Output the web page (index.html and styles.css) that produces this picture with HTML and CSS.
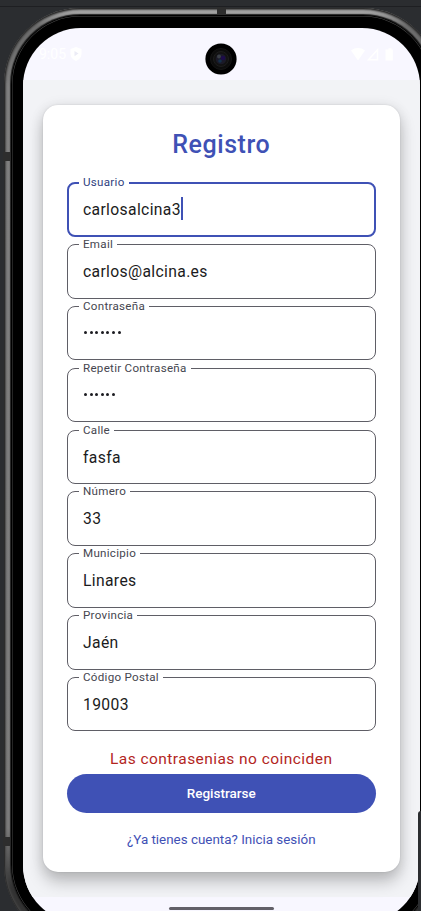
FILE: index.html
```html
<!DOCTYPE html>
<html lang="es">
<head>
<meta charset="utf-8">
<title>Registro</title>
<link rel="stylesheet" href="styles.css">
</head>
<body>
<div class="desk">
  <div class="phone">
    <div class="bezel">
      <div class="screen">
        <header class="status">
          <span class="clock">9:05</span>
          <svg class="shield" width="12" height="14" viewBox="0 0 12 14"><path fill="#fff" d="M6 0l5.500 2v5c0 3-2.300 5.700-5.500 7C2.800 12.700.5 10 .5 7V2z"/><path fill="#ececf6" d="M4.500 4l4 2.600-4 2.600z"/></svg>
          <svg class="signals" width="42" height="13" viewBox="0 0 42 13"><path fill="#fff" d="M0 2.500C4-.8 10-.8 14 2.500L7 12.500zM35.500 1.500h2V.3h3v1.200h1.300v11h-7.300v-11z"/><path fill="none" stroke="#fff" stroke-width="1.500" d="M17.500 11.800h9v-10z"/></svg>
        </header>
        <main class="content">
          <form class="card">
            <h1>Registro</h1>
            <div class="fields">
              <fieldset class="focused"><legend>Usuario</legend><span class="value">carlosalcina3</span><i class="caret"></i></fieldset>
              <fieldset><legend>Email</legend><span class="value">carlos@alcina.es</span></fieldset>
              <fieldset><legend>Contraseña</legend><span class="value dots"><i></i><i></i><i></i><i></i><i></i><i></i><i></i></span></fieldset>
              <fieldset><legend>Repetir Contraseña</legend><span class="value dots"><i></i><i></i><i></i><i></i><i></i><i></i></span></fieldset>
              <fieldset><legend>Calle</legend><span class="value">fasfa</span></fieldset>
              <fieldset><legend>Número</legend><span class="value">33</span></fieldset>
              <fieldset><legend>Municipio</legend><span class="value">Linares</span></fieldset>
              <fieldset><legend>Provincia</legend><span class="value">Jaén</span></fieldset>
              <fieldset><legend>Código Postal</legend><span class="value">19003</span></fieldset>
            </div>
            <p class="error">Las contrasenias no coinciden</p>
            <button type="button">Registrarse</button>
            <a class="login">¿Ya tienes cuenta? Inicia sesión</a>
          </form>
        </main>
        <footer class="nav"><span class="handle"></span></footer>
      </div>
    </div>
  </div>
  <div class="line"></div>
  <div class="band band-top"></div>
  <div class="band band-left"></div>
  <div class="band band-low"></div>
  <div class="side-panel"></div>
  <svg class="camera" width="32" height="32" viewBox="0 0 32 32"><circle cx="16" cy="16" r="15.600"/><circle cx="16" cy="16" r="10.500" fill="#0c0c0c" stroke="#141414"/><circle cx="16" cy="16" r="7.500" fill="#121212" stroke="#1d1d1d"/><circle cx="16" cy="16" r="5.300" fill="#1b1a28"/><circle cx="14" cy="13.500" r="2" fill="#3a3f46"/><circle cx="18" cy="15" r="2.300" fill="#1d0c4a"/><circle cx="15" cy="18" r="1.800" fill="#14304a"/></svg>
</div>
</body>
</html>
```
FILE: styles.css
```css
* { box-sizing: border-box; }
html, body { margin: 0; height: 100%; overflow: hidden; }
body { font-family: Roboto, "Noto Sans", sans-serif; }
.desk {
  position: relative;
  width: 421px;
  height: 911px;
  padding: 8px 0 0 4px;
  overflow: hidden;
  background: #2b2d30;
}
.phone {
  width: 435px;
  height: 934px;
  padding: 7px 7px 8px;
  border-radius: 76px;
  background: linear-gradient(#b0b0b0 0, #a0a0a0 5px, #6e6e6e 18px, #6e6e6e 40px, #808080 80px, #7c7c7c 820px, #333 880px);
  box-shadow: inset 0 0 1px 1px #2a2a2a, inset 0 0 2px 2px #4a4a4a;
}
.bezel {
  height: 919px;
  padding: 13px 12px 11px;
  border-radius: 69px;
  background: #000;
  box-shadow: 0 0 1px 1px #222, inset 0 0 0 1px #000, inset 0 0 0 1.500px #4a4a4a;
}
.screen {
  width: 397px;
  height: 895px;
  border-radius: 58px;
  overflow: hidden;
  background: #f8f7ff;
}
.status {
  display: flex;
  align-items: center;
  height: 52px;
  padding: 0 27px 0 16px;
}
.clock { color: #fff; font-size: 14px; line-height: 16px; }
.shield { margin-left: 4px; }
.signals { margin-left: auto; }
.content {
  height: 817px;
  padding: 25px 20px 0 19.500px;
  background: #f2f3f6;
}
.card {
  display: flex;
  flex-direction: column;
  height: 767px;
  padding: 24px 24.500px 0;
  border-radius: 15px;
  background: #fff;
  box-shadow: 0 0 2px rgba(0,0,0,.12), 0 1px 14px rgba(0,0,0,.09), 0 10px 16px rgba(0,0,0,.22);
}
h1 {
  margin: 0;
  height: 47px;
  color: #3f51b5;
  font-size: 25px;
  line-height: 32px;
  font-weight: 500;
  letter-spacing: .55px;
  text-align: center;
}
.fields { display: grid; flex: none; grid-template-rows: 62px; grid-auto-rows: 61.850px; height: 556px; }
fieldset {
  min-width: 0;
  display: flex;
  height: 60.500px;
  margin: 0;
  padding: 0 0 0 15px;
  border: 1px solid #5f5e66;
  border-radius: 8px;
}
legend {
  margin-left: -4px;
  padding: 0 4px;
  color: #45464f;
  font-size: 11.600px;
  line-height: 13px;
  letter-spacing: .28px;
}
.focused { border: 2px solid #3f51b5; padding-left: 14px; }
.focused legend { color: #303f80; }
.value {
  padding-top: 11px;
  color: #1b1b21;
  font-size: 15.700px;
  line-height: 20px;
  letter-spacing: .35px;
}
.caret { width: 2px; height: 23px; margin-top: 8px; background: #3f51b5; }
.dots { display: flex; gap: 2.600px; padding: 18.500px 0 0 1px; }
.dots i { width: 3px; height: 3px; border-radius: 50%; background: #1b1b21; }
.error {
  margin: 17px 0 5px;
  color: #b3261e;
  font-size: 15.500px;
  line-height: 20px;
  letter-spacing: .45px;
  text-align: center;
}
button {
  flex: none;
  height: 38.500px;
  border: 0;
  border-radius: 20px;
  background: #3f51b5;
  color: #fff;
  font: 500 13.500px/20px Roboto, sans-serif;
}
.login {
  margin-top: 18px;
  color: #3f51b5;
  font-size: 13.400px;
  line-height: 18px;
  text-align: center;
}
.nav { display: flex; justify-content: center; padding-top: 10px; }
.handle { width: 105px; height: 3px; border-radius: 2px; background: #626068; }
.line, .band, .side-panel, .camera { position: absolute; }
.line { left: 0; top: 6px; width: 421px; height: 1px; background: #1e1f22; }
.band { background: #2d2d2d; }
.band-top { left: 217px; top: 7px; width: 9px; height: 8px; }
.band-left { left: 3px; top: 152px; width: 7px; height: 9px; }
.band-low { left: 3px; top: 837px; width: 7px; height: 9px; }
.side-panel { left: 418px; top: 811px; width: 8px; height: 105px; border-radius: 3px; background: #2b2d30; }
.camera { left: 205px; top: 43px; }
```
